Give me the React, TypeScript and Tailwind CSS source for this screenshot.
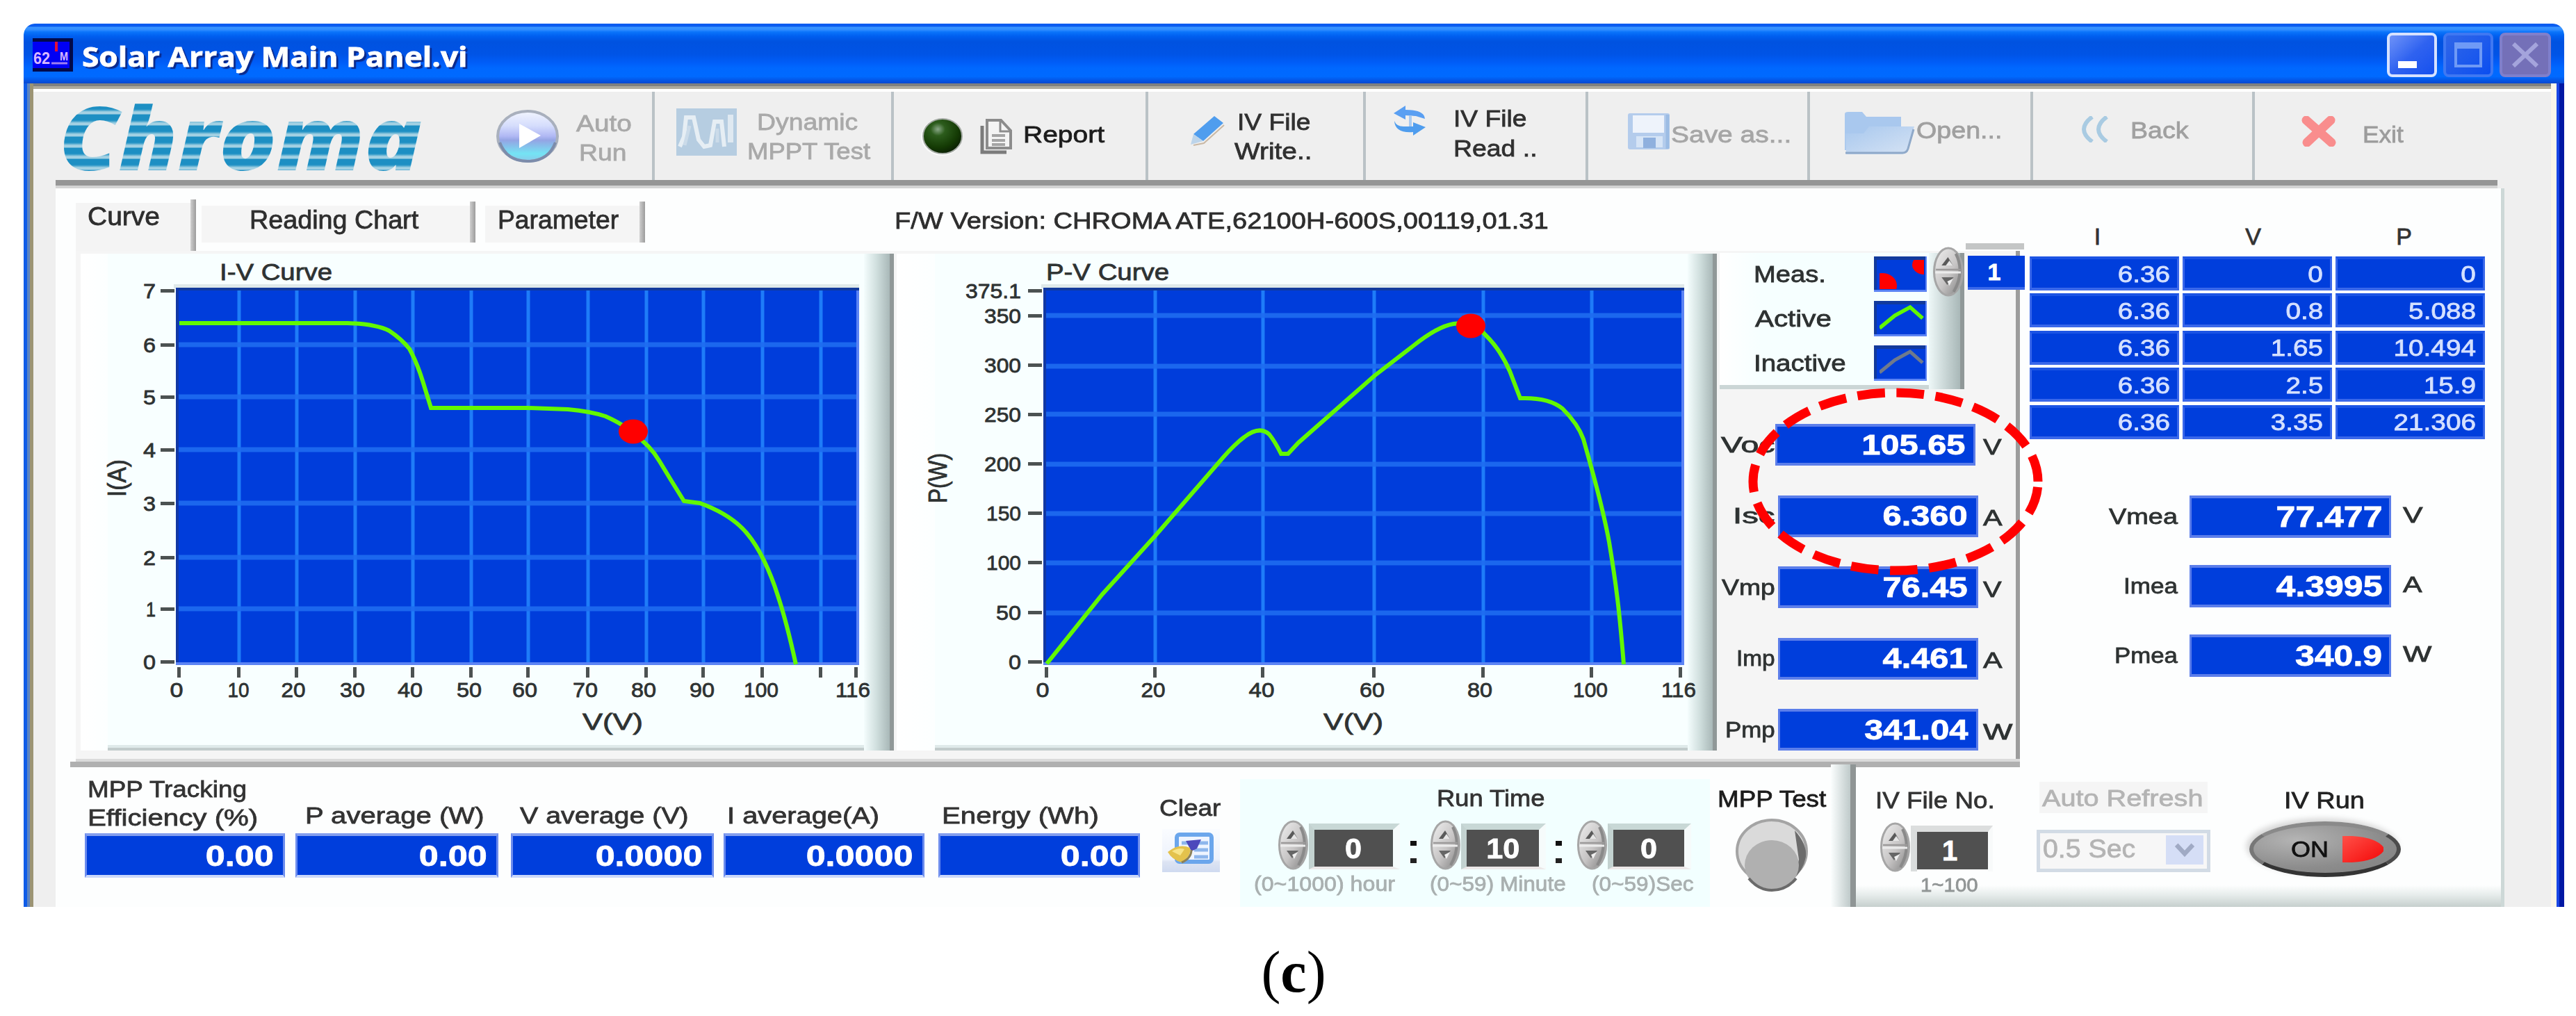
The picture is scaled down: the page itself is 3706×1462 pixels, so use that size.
import React, { useLayoutEffect, useRef } from "react";

/* One line of text stretched horizontally to fill the width of its box. */
function Fit({ className = "", children }: { className?: string; children: React.ReactNode }) {
  const outer = useRef<HTMLDivElement>(null);
  const inner = useRef<HTMLSpanElement>(null);
  useLayoutEffect(() => {
    const o = outer.current;
    const i = inner.current;
    if (o && i && i.offsetWidth > 0) {
      i.style.transform = `scaleX(${o.clientWidth / i.offsetWidth})`;
    }
  });
  return (
    <div ref={outer} className={"flex shrink-0 items-center whitespace-pre leading-none " + className}>
      <span ref={inner} className="inline-block origin-left">
        {children}
      </span>
    </div>
  );
}

function Spinner({ className = "" }: { className?: string }) {
  return (
    <svg viewBox="0 0 45 72" preserveAspectRatio="none" className={"shrink-0 " + className}>
      <defs>
        <linearGradient id="spin" x1="0" x2="1" y1="0" y2="1">
          <stop offset="0" stopColor="#f0f0f0" />
          <stop offset="0.55" stopColor="#c6c4c4" />
          <stop offset="1" stopColor="#7c7c7c" />
        </linearGradient>
      </defs>
      <ellipse cx="22.5" cy="36" rx="20" ry="34" fill="url(#spin)" stroke="#a6a6a6" strokeWidth="3" />
      <path d="M33 10 Q46 36 30 65" fill="none" stroke="#8a8a8a" strokeWidth="4" />
      <path d="M5 33 H40" stroke="#9c9a9a" strokeWidth="2.5" />
      <path d="M4 37 H40" stroke="#ececec" strokeWidth="3" />
      <path d="M13 27 L22 15 L29 27 Z" fill="#5a5a5a" />
      <path d="M19 27 L24 20 L29 27 Z" fill="#e6e6e6" />
      <path d="M13 44 H30 L21 55 Z" fill="#666" />
      <path d="M21 50 L29 46 L24 56 Z" fill="#f0f0f0" />
    </svg>
  );
}

function BlueBox({ className = "", text }: { className?: string; text: string }) {
  return (
    <div
      className={
        "flex shrink-0 items-center justify-end border-x-[3px] border-y-[4px] border-[#5c7eea] bg-[#003edc] font-bold leading-none text-white " +
        className
      }
    >
      <span className="inline-block origin-right scale-x-[1.19]">{text}</span>
    </div>
  );
}

const TITLE_BG =
  "bg-[linear-gradient(to_bottom,#0a5cf0_0px,#0a5cf0_4px,#3b96ff_5px,#2f8cff_9px,#0a74fb_12px,#005ff0_18px,#0052e0_26px,#0054e6_44px,#005df8_56px,#0068ff_64px,#006aff_76px,#0458e8_81px,#0a48d0_86px)]";

function TitleBar() {
  return (
    <div className={"flex h-[86px] shrink-0 items-start rounded-t-[16px] " + TITLE_BG}>
      <div className="mt-[21px] ml-[13px] flex h-[48px] w-[58px] items-center border-y-[5px] border-r-[5px] border-[#020a4a] bg-[#0000f4]">
        <svg viewBox="0 0 53 38" className="h-[38px] w-[53px] shrink-0">
          <path d="M34 0 V14" stroke="#e0103a" strokeWidth="4" />
          <text x="1" y="32" fontWeight="bold" fontSize="24" fill="#d8b8ff" textLength="24" lengthAdjust="spacingAndGlyphs">62</text>
          <text x="39" y="27" fontWeight="bold" fontSize="17" fill="#d8b8ff" textLength="12" lengthAdjust="spacingAndGlyphs">M</text>
          <path d="M27 31 H50" stroke="#a080f0" strokeWidth="3" />
        </svg>
      </div>
      <Fit className="mt-[27px] ml-[13px] h-[40px] w-[554px] text-[40px] font-bold text-white [font-family:'Open_Sans',sans-serif] [text-shadow:3px_3px_1px_#0b2a8c]">
        Solar Array Main Panel.vi
      </Fit>
      <div className="mt-[13px] mr-[19px] ml-auto flex gap-[9px]">
        <div className="flex h-[64px] w-[72px] items-end rounded-[8px] border-[4px] border-[#d6e2ff] bg-linear-to-br from-[#6f92f8] via-[#2f62f0] to-[#1450ee] pb-[9px] pl-[12px]">
          <div className="h-[10px] w-[27px] bg-white" />
        </div>
        <div className="flex h-[64px] w-[72px] items-center justify-center rounded-[8px] border-[4px] border-[#3f78f2] bg-linear-to-br from-[#2f66e8] to-[#0a4ef0]">
          <div className="h-[36px] w-[40px] border-[4px] border-t-[9px] border-[#6f9af6]" />
        </div>
        <div className="flex h-[64px] w-[74px] items-center justify-center rounded-[8px] border-[4px] border-[#7f7fcc] bg-[#7470b8]">
          <svg viewBox="0 0 40 36" className="h-[36px] w-[42px]">
            <path d="M3 2 L37 34 M37 2 L3 34" stroke="#a4a4dc" strokeWidth="6" />
          </svg>
        </div>
      </div>
    </div>
  );
}

const CELL = "flex h-[127px] shrink-0 items-center border-r-[4px] border-[#bac2c6]";

function Toolbar() {
  return (
    <div className="flex h-[127px] shrink-0 bg-[#efefef] text-[34px]">
      <div className={CELL + " w-[894px]"}>
        <Fit className="ml-[37px] h-[127px] w-[528px] text-[126px] font-extrabold text-transparent italic [-webkit-text-stroke:0px] [font-family:'Open_Sans',sans-serif] [&>span]:bg-[repeating-linear-gradient(to_bottom,#1d8fc3_0px,#1d8fc3_8px,#55abd0_10px,#a3d1e3_12px,#a3d1e3_15px,#1d8fc3_16px)] [&>span]:bg-clip-text [&>span]:pr-[6px]">
          Chroma
        </Fit>
        <svg viewBox="0 0 92 78" className="ml-[100px] h-[78px] w-[92px] shrink-0">
          <defs>
            <linearGradient id="play" x1="0" x2="0" y1="0" y2="1">
              <stop offset="0" stopColor="#f2f5ff" />
              <stop offset="0.3" stopColor="#d4dcfc" />
              <stop offset="0.5" stopColor="#b0b8f4" />
              <stop offset="0.58" stopColor="#94a4e4" />
              <stop offset="0.85" stopColor="#74e4f4" />
              <stop offset="1" stopColor="#8ac8ea" />
            </linearGradient>
          </defs>
          <ellipse cx="46" cy="39" rx="43" ry="36" fill="url(#play)" stroke="#a9b0bd" strokeWidth="4" />
          <path d="M6 48 Q16 75 46 75 Q76 75 86 48" fill="none" stroke="#7c8cab" strokeWidth="4" />
          <path d="M34 21 L65 38 L34 56 Z" fill="#fff" />
        </svg>
        <div className="mt-[5px] ml-[24px] flex flex-col text-[#a9a9a9]">
          <Fit className="h-[42px] w-[80px]">Auto</Fit>
          <Fit className="ml-[4px] h-[42px] w-[68px]">Run</Fit>
        </div>
      </div>
      <div className={CELL + " w-[344px]"}>
        <svg viewBox="0 0 89 70" className="mb-[12px] ml-[30px] h-[70px] w-[89px] shrink-0">
          <rect x="1" y="1" width="87" height="68" fill="#b6cde1" />
          <path d="M6 56 L12 42 L15 14 H26 L33 46 L41 56 L50 54 L56 20 H66 L70 56" fill="none" stroke="#e6eef4" strokeWidth="6" />
          <path d="M13 54 L20 26 M60 50 V30" stroke="#cbdbe9" strokeWidth="5" />
          <path d="M79 10 V50" stroke="#dfe9f1" strokeWidth="8" />
        </svg>
        <div className="ml-[14px] flex flex-col text-[#a9a9a9]">
          <Fit className="ml-[14px] h-[42px] w-[145px]">Dynamic</Fit>
          <Fit className="h-[42px] w-[177px]">MPPT Test</Fit>
        </div>
      </div>
      <div className={CELL + " w-[366px] text-[#1c1c1c]"}>
        <svg viewBox="0 0 64 58" className="ml-[36px] h-[58px] w-[64px] shrink-0">
          <defs>
            <radialGradient id="led" cx="0.38" cy="0.3" r="0.75">
              <stop offset="0" stopColor="#8aa888" />
              <stop offset="0.25" stopColor="#2c5c1c" />
              <stop offset="0.7" stopColor="#143a04" />
              <stop offset="1" stopColor="#0a1c04" />
            </radialGradient>
          </defs>
          <ellipse cx="33" cy="30" rx="30" ry="27" fill="#fafafa" />
          <ellipse cx="34" cy="29" rx="28" ry="25" fill="url(#led)" stroke="#a4aaa4" strokeWidth="2" />
        </svg>
        <svg viewBox="0 0 52 54" className="ml-[22px] h-[54px] w-[52px] shrink-0">
          <path d="M12 4 H32 L46 19 V44 H12 Z" fill="#f4f4f4" stroke="#8c8c8c" strokeWidth="4" />
          <path d="M31 4 V20 H46" fill="none" stroke="#8c8c8c" strokeWidth="3" />
          <path d="M5 12 V50 H40" fill="none" stroke="#7c7c7c" strokeWidth="5" />
          <path d="M19 26 H38 M19 33 H38 M19 39 H38" stroke="#a4a4a4" strokeWidth="4" />
        </svg>
        <Fit className="mb-[6px] ml-[12px] h-[42px] w-[117px]">Report</Fit>
      </div>
      <div className={CELL + " w-[313px] text-[#303030]"}>
        <svg viewBox="0 0 52 46" className="mb-[18px] ml-[59px] h-[46px] w-[52px] shrink-0">
          <path d="M36 3 L49 13 L20 39 L6 29 Z" fill="#4f9dee" />
          <path d="M6 29 L20 39 L2 44 Z" fill="#bcd4ea" />
          <path d="M50 16 L21 42 L6 45" fill="none" stroke="#c9b8a4" strokeWidth="2" />
        </svg>
        <div className="ml-[13px] flex flex-col">
          <Fit className="ml-[4px] h-[42px] w-[105px]">IV File</Fit>
          <Fit className="h-[42px] w-[112px]">Write..</Fit>
        </div>
      </div>
      <div className={CELL + " w-[320px] text-[#303030]"}>
        <svg viewBox="0 0 50 44" className="mb-[43px] ml-[38px] h-[44px] w-[50px] shrink-0">
          <path d="M2 11 L19 0 V6 Q46 6 47 19 L34 15 L19 14 V20 Z" fill="#5a9ff2" />
          <path d="M3 22 Q6 30 16 30 H30 V24 L48 31 L30 43 V38 Q4 40 3 22 Z" fill="#4f9dee" />
          <path d="M26 14 V30" stroke="#a9cbf2" strokeWidth="4" />
        </svg>
        <div className="mb-[8px] ml-[38px] flex flex-col">
          <Fit className="h-[43px] w-[105px]">IV File</Fit>
          <Fit className="h-[43px] w-[121px]">Read ..</Fit>
        </div>
      </div>
      <div className={CELL + " w-[319px] text-[#a6a6a6]"}>
        <svg viewBox="0 0 64 54" className="mb-[13px] ml-[55px] h-[54px] w-[64px] shrink-0">
          <rect x="2" y="1" width="60" height="52" rx="3" fill="#b4ccec" />
          <rect x="9" y="4" width="45" height="25" fill="#eef3fb" />
          <rect x="14" y="34" width="38" height="16" fill="#d6e4f6" />
          <rect x="24" y="36" width="18" height="15" fill="#8fb0de" />
          <path d="M59 3 V52" stroke="#9cbce4" strokeWidth="5" />
        </svg>
        <Fit className="mb-[5px] h-[42px] w-[173px]">Save as...</Fit>
      </div>
      <div className={CELL + " w-[321px] text-[#a0a0a0]"}>
        <svg viewBox="0 0 106 64" className="mb-[8px] ml-[47px] h-[64px] w-[106px] shrink-0">
          <defs>
            <linearGradient id="fold" x1="0" x2="1" y1="0" y2="1">
              <stop offset="0" stopColor="#a8c8ee" />
              <stop offset="1" stopColor="#d6e3f4" />
            </linearGradient>
          </defs>
          <path d="M3 4 Q3 1 8 1 H28 L34 8 H84 V56 H3 Z" fill="#a9c8ee" />
          <path d="M38 22 H103 L92 58 Q90 62 84 62 H5 L4 32 H30 Z" fill="url(#fold)" />
          <path d="M4 60 H86 Q92 60 94 54 L102 26" fill="none" stroke="#8fa9c9" strokeWidth="3" />
        </svg>
        <Fit className="mb-[18px] h-[42px] w-[124px]">Open...</Fit>
      </div>
      <div className={CELL + " w-[319px] text-[#a0a0a0]"}>
        <svg viewBox="0 0 42 38" className="mb-[20px] ml-[67px] h-[38px] w-[42px] shrink-0">
          <path d="M18 1 Q-6 19 18 37 M39 1 Q15 19 39 37" fill="none" stroke="#a9cbe2" strokeWidth="6" />
        </svg>
        <Fit className="mb-[18px] ml-[31px] h-[42px] w-[84px]">Back</Fit>
      </div>
      <div className="flex h-[127px] grow items-center text-[#9c9c9c]">
        <svg viewBox="0 0 52 44" className="mb-[14px] ml-[66px] h-[44px] w-[52px] shrink-0">
          <path d="M8 6 L44 38 M43 6 L9 38" stroke="#f98d8d" strokeWidth="13" strokeLinecap="round" />
        </svg>
        <Fit className="mb-[6px] ml-[37px] h-[42px] w-[59px]">Exit</Fit>
      </div>
    </div>
  );
}

function Tabs() {
  return (
    <div className="flex h-[90px] shrink-0 items-start text-[36px] text-[#2e2e2e]">
      <div className="mt-[21px] flex h-[69px] w-[165px] items-start bg-[#f4f4f4] pl-[17px]">
        <Fit className="h-[39px] w-[104px]">Curve</Fit>
      </div>
      <div className="mt-[16px] h-[74px] w-[8px] bg-linear-to-r from-[#d0d0d0] to-[#9c9c9c]" />
      <div className="mt-[25px] ml-[8px] flex h-[53px] w-[386px] items-start bg-[#f5f5f5] pl-[69px]">
        <Fit className="h-[42px] w-[243px]">Reading Chart</Fit>
      </div>
      <div className="mt-[19px] h-[59px] w-[8px] bg-linear-to-r from-[#d0d0d0] to-[#9c9c9c]" />
      <div className="mt-[25px] ml-[14px] flex h-[53px] w-[222px] items-start bg-[#f5f5f5] pl-[18px]">
        <Fit className="h-[42px] w-[174px]">Parameter</Fit>
      </div>
      <div className="mt-[19px] h-[59px] w-[8px] bg-linear-to-r from-[#d0d0d0] to-[#9c9c9c]" />
      <Fit className="mt-[25px] ml-[359px] h-[42px] w-[941px] text-[34px]">F/W Version: CHROMA ATE,62100H-600S,00119,01.31</Fit>
    </div>
  );
}

type Label = { at: number; text: string; w: number };
type ChartSpec = {
  x: number;
  w: number;
  viewBox: string;
  gridX: number[];
  gridY: number[];
  tickX: number[];
  labelsX: Label[];
  labelsY: Label[];
  yRight: number;
  title: { x: number; w: number; text: string };
  xTitle: { x: number; w: number };
  yTitle: { x: number; w: number; text: string };
  curve: string;
  dot: [number, number];
};

const CHART_IV: ChartSpec = {
  x: 253,
  w: 983,
  viewBox: "155 365 1088 707",
  gridX: [344, 427, 511, 594, 678, 760, 846, 930, 1012, 1097, 1181],
  gridY: [496, 571, 647, 724, 802, 876],
  tickX: [258, 344, 427, 511, 594, 678, 760, 846, 930, 1012, 1097, 1181, 1232],
  labelsX: [
    { at: 254, text: "0", w: 19 },
    { at: 343, text: "10", w: 31 },
    { at: 422, text: "20", w: 35 },
    { at: 507, text: "30", w: 36 },
    { at: 590, text: "40", w: 36 },
    { at: 675, text: "50", w: 36 },
    { at: 755, text: "60", w: 36 },
    { at: 842, text: "70", w: 36 },
    { at: 926, text: "80", w: 36 },
    { at: 1010, text: "90", w: 36 },
    { at: 1095, text: "100", w: 50 },
    { at: 1227, text: "116", w: 50 },
  ],
  labelsY: [
    { at: 418, text: "7", w: 18 },
    { at: 496, text: "6", w: 18 },
    { at: 571, text: "5", w: 18 },
    { at: 647, text: "4", w: 18 },
    { at: 724, text: "3", w: 18 },
    { at: 802, text: "2", w: 18 },
    { at: 876, text: "1", w: 14 },
    { at: 952, text: "0", w: 18 },
  ],
  yRight: 224,
  title: { x: 316, w: 162, text: "I-V Curve" },
  xTitle: { x: 838, w: 87 },
  yTitle: { x: 169, w: 54, text: "I(A)" },
  curve:
    "M258 465 H500 Q540 466 560 476 Q578 488 589 502 Q600 522 608 548 L620 587 H759 L817 589 Q850 592 871 599 Q900 612 912 625 Q935 640 949 664 L966 692 L984 721 L1007 724 C1040 736 1062 752 1075 768 C1092 788 1108 822 1119 857 C1130 890 1138 924 1145 956",
  dot: [911, 621],
};

const CHART_PV: ChartSpec = {
  x: 1501,
  w: 922,
  viewBox: "1345 365 1083 707",
  gridX: [1662, 1817, 1977, 2134, 2290],
  gridY: [454, 527, 596, 668, 739, 810, 882],
  tickX: [1506, 1662, 1817, 1977, 2134, 2290, 2418],
  labelsX: [
    { at: 1500, text: "0", w: 19 },
    { at: 1659, text: "20", w: 35 },
    { at: 1815, text: "40", w: 37 },
    { at: 1974, text: "60", w: 36 },
    { at: 2129, text: "80", w: 36 },
    { at: 2288, text: "100", w: 50 },
    { at: 2415, text: "116", w: 50 },
  ],
  labelsY: [
    { at: 418, text: "375.1", w: 80 },
    { at: 454, text: "350", w: 53 },
    { at: 525, text: "300", w: 53 },
    { at: 596, text: "250", w: 53 },
    { at: 667, text: "200", w: 53 },
    { at: 738, text: "150", w: 50 },
    { at: 809, text: "100", w: 50 },
    { at: 881, text: "50", w: 36 },
    { at: 952, text: "0", w: 18 },
  ],
  yRight: 1469,
  title: { x: 1505, w: 177, text: "P-V Curve" },
  xTitle: { x: 1904, w: 86 },
  yTitle: { x: 1350, w: 72, text: "P(W)" },
  curve:
    "M1506 955 L1586 855 L1662 771 L1753 666 Q1775 640 1790 629 Q1812 612 1826 625 Q1834 635 1843 653 H1853 L1868 637 L1977 541 L2034 497 Q2068 470 2091 466 Q2120 462 2137 482 Q2158 502 2172 534 L2187 573 C2215 572 2236 578 2248 588 C2262 602 2272 615 2278 632 C2290 675 2305 725 2315 780 C2325 840 2330 880 2336 956",
  dot: [2116, 469],
};

function ChartPanel({ c, bevel, edge }: { c: ChartSpec; bevel: string; edge: string }) {
  return (
    <div className="mt-[4px] flex h-[715px] shrink-0">
      <div className={"h-[715px] shrink-0 bg-linear-to-r from-white to-[#fcffff] " + bevel} />
      <div className="relative z-10 flex shrink-0 flex-col bg-[#f8ffff]">
        <svg
          viewBox={c.viewBox}
          className={
            "h-[707px] overflow-visible [&_text]:stroke-[#2e3232] [&_text]:stroke-[0.8px] " + (c.x < 1000 ? "w-[1088px]" : "w-[1083px]")
          }
          fill="#2e3232"
        >
          <rect x={c.x - 3} y={409} width={c.w + 3} height={6} fill="#dfe9ea" />
          <rect x={c.x} y={414} width={c.w} height={543} fill="#003ddb" />
          {c.gridX.map((x) => (
            <rect key={x} x={x - 2.5} y={417} width={5} height={538} fill="#1e7cf8" />
          ))}
          {c.gridY.map((y) => (
            <rect key={y} x={c.x} y={y - 3.5} width={c.w} height={7} fill="#1e6cf0" opacity={0.9} />
          ))}
          <rect x={c.x} y={414} width={c.w} height={4} fill="#123a9c" />
          <rect x={c.x} y={414} width={4} height={543} fill="#1238a4" />
          <rect x={c.x} y={953} width={c.w} height={4} fill="#5c84f4" />
          <rect x={c.x + c.w - 4} y={418} width={4} height={539} fill="#5c84f4" />
          {c.tickX.map((x) => (
            <rect key={x} x={x - 3} y={960} width={5} height={15} fill="#4c5252" />
          ))}
          {c.labelsX.map((l) => (
            <text key={l.at} x={l.at - l.w / 2} y={1003} fontSize={30} textLength={l.w} lengthAdjust="spacingAndGlyphs">
              {l.text}
            </text>
          ))}
          {c.labelsY.map((l) => (
            <g key={l.at}>
              <text x={c.yRight - l.w} y={l.at + 11} fontSize={30} textLength={l.w} lengthAdjust="spacingAndGlyphs">
                {l.text}
              </text>
              <rect x={c.x - 22} y={l.at - 2} width={20} height={5} fill="#4c5252" />
            </g>
          ))}
          <text x={c.title.x} y={403} fontSize={34} textLength={c.title.w} lengthAdjust="spacingAndGlyphs">
            {c.title.text}
          </text>
          <text x={c.xTitle.x} y={1050} fontSize={33} textLength={c.xTitle.w} lengthAdjust="spacingAndGlyphs">
            V(V)
          </text>
          <text
            transform={`translate(${c.yTitle.x + 12} ${688 + c.yTitle.w / 2}) rotate(-90)`}
            fontSize={36}
            textLength={c.yTitle.w}
            lengthAdjust="spacingAndGlyphs"
          >
            {c.yTitle.text}
          </text>
          <path d={c.curve} fill="none" stroke="#62f800" strokeWidth={6} />
          <ellipse cx={c.dot[0]} cy={c.dot[1]} rx={21} ry={17.5} fill="#ff0000" />
        </svg>
        <div className="h-[4px] bg-[#dfeaea]" />
        <div className="h-[4px] bg-[#c2cccc]" />
      </div>
      <div className={"h-[715px] shrink-0 bg-linear-to-r from-[#f4fdfd] via-[#cfdedd] to-[#a9b8b8] " + edge} />
      <div className="h-[715px] w-[6px] shrink-0 bg-[#909898]" />
    </div>
  );
}

function LegendSwatch({ children }: { children: React.ReactNode }) {
  return (
    <svg viewBox="0 0 76 51" className="h-[51px] w-[76px] shrink-0">
      <defs>
        <clipPath id="swatch">
          <rect x="8" y="5" width="64" height="42" />
        </clipPath>
      </defs>
      <rect width="76" height="51" fill="#5c84f4" />
      <rect width="74" height="48" fill="#123a9c" />
      <rect x="4" y="5" width="70" height="43" fill="#003ddb" />
      <g clipPath="url(#swatch)">{children}</g>
    </svg>
  );
}

function Legend() {
  return (
    <div className="ml-[4px] flex h-[199px] shrink-0 pt-[3px] text-[33px] text-[#2e3232]">
      <div className="flex w-[301px] flex-col border-b-[6px] border-[#cbd6d6] bg-linear-to-r from-white via-[#f6ffff] via-20% to-[#f6ffff]">
        <div className="flex h-[62px] items-center pl-[49px]">
          <Fit className="h-[40px] w-[104px]">Meas.</Fit>
          <div className="ml-[69px]">
            <LegendSwatch>
              <ellipse cx="12" cy="42" rx="21" ry="18" fill="#f00" />
              <ellipse cx="73" cy="12" rx="18" ry="14" fill="#f00" />
            </LegendSwatch>
          </div>
        </div>
        <div className="mt-[3px] flex h-[65px] items-center pl-[51px]">
          <Fit className="h-[40px] w-[110px]">Active</Fit>
          <div className="ml-[61px]">
            <LegendSwatch>
              <path d="M8 39 L30 21 L52 9 L70 25" fill="none" stroke="#62f800" strokeWidth="5.5" />
            </LegendSwatch>
          </div>
        </div>
        <div className="flex h-[66px] items-center pl-[49px]">
          <Fit className="h-[40px] w-[133px]">Inactive</Fit>
          <div className="ml-[40px]">
            <LegendSwatch>
              <path d="M8 39 L30 21 L52 9 L70 25" fill="none" stroke="#6f7a8c" strokeWidth="5" />
            </LegendSwatch>
          </div>
        </div>
      </div>
      <div className="w-[45px] bg-linear-to-r from-[#eef8f8] to-[#a9b8b8]" />
      <div className="w-[6px] bg-[#909898]" />
    </div>
  );
}

const READOUTS = [
  { name: "Voc", value: "105.65", unit: "V", lw: "w-[78px]", uw: "w-[27px]" },
  { name: "Isc", value: "6.360", unit: "A", lw: "w-[61px]", uw: "w-[28px]" },
  { name: "Vmp", value: "76.45", unit: "V", lw: "w-[77px]", uw: "w-[27px]" },
  { name: "Imp", value: "4.461", unit: "A", lw: "w-[56px]", uw: "w-[28px]" },
  { name: "Pmp", value: "341.04", unit: "W", lw: "w-[72px]", uw: "w-[42px]" },
];

function Readouts() {
  return (
    <div className="relative mt-[29px] flex flex-col text-[31px] text-[#2e3232]">
      {READOUTS.map((r) => (
        <div key={r.name} className="flex h-[102.5px] shrink-0 items-center">
          <div className="flex w-[84px] shrink-0 justify-end">
            <Fit className={"h-[40px] " + r.lw}>{r.name}</Fit>
          </div>
          <BlueBox
            className={"h-[60px] w-[288px] pr-[12px] text-[41px] " + (r.name === "Voc" ? "mr-[11px]" : "ml-[4px] mr-[7px]")}
            text={r.value}
          />
          <Fit className={"mt-[6px] h-[40px] " + r.uw}>{r.unit}</Fit>
        </div>
      ))}
      <svg viewBox="0 0 424 270" className="absolute top-[-32px] left-[44px] h-[270px] w-[424px] overflow-visible">
        <ellipse cx="213" cy="136" rx="205" ry="128" fill="none" stroke="#ff0000" strokeWidth="13" strokeDasharray="39.7 16.6" strokeDashoffset="-8" />
      </svg>
    </div>
  );
}

const ROWS = [
  ["6.36", "0", "0"],
  ["6.36", "0.8", "5.088"],
  ["6.36", "1.65", "10.494"],
  ["6.36", "2.5", "15.9"],
  ["6.36", "3.35", "21.306"],
];

const MEASURED = [
  { name: "Vmea", value: "77.477", unit: "V", lw: "w-[99px]", uw: "w-[29px]" },
  { name: "Imea", value: "4.3995", unit: "A", lw: "w-[78px]", uw: "w-[28px]" },
  { name: "Pmea", value: "340.9", unit: "W", lw: "w-[91px]", uw: "w-[41px]" },
];

function DataSide() {
  return (
    <div className="relative flex w-[692px] shrink-0 flex-col pl-[14px]">
      <div className="grid h-[98px] w-[655px] shrink-0 grid-cols-3 pt-[45px] pr-[4px] text-center text-[34px] text-[#333]">
        <span className="h-[48px] pr-[22px] leading-[48px]">I</span>
        <span className="h-[48px] pr-[8px] leading-[48px]">V</span>
        <span className="h-[48px] pr-[8px] leading-[48px]">P</span>
      </div>
      <div className="grid w-[655px] shrink-0 grid-cols-3 gap-x-[5px] gap-y-[4.4px] text-[34px] text-[#d4e0ff]">
        {ROWS.flat().map((v, i) => (
          <div
            key={i}
            className="flex h-[49px] items-center justify-end border-x-[3px] border-t-[4px] border-b-[4px] border-[#3a68ea] border-t-[#1c54e4] bg-[#003edc] pr-[10px] leading-none"
          >
            <span className="inline-block origin-right scale-x-[1.14]">{v}</span>
          </div>
        ))}
      </div>
      <div className="mt-[62px] flex flex-col text-[31px] text-[#2e3232]">
        {MEASURED.map((m) => (
          <div key={m.name} className="flex h-[100px] shrink-0 items-center">
            <div className="flex w-[213px] shrink-0 justify-end">
              <Fit className={"h-[40px] " + m.lw}>{m.name}</Fit>
            </div>
            <BlueBox className="ml-[17px] h-[61px] w-[290px] pr-[10px] text-[42px]" text={m.value} />
            <Fit className={"mb-[5px] ml-[17px] h-[40px] " + m.uw}>{m.unit}</Fit>
          </div>
        ))}
      </div>
      <div className="absolute top-[79px] left-[-126px] flex items-start">
        <Spinner className="mt-[5px] h-[72px] w-[46px]" />
        <div className="ml-[2px] h-[18px] w-[84px] border-t-[9px] border-[#c4c6c6] pt-[9px]">
          <div className="ml-[3px] flex h-[49px] w-[82px] items-center justify-center border-b-[4px] border-[#3a68ea] bg-[#003edc] pr-[6px] text-[34px] leading-none font-bold text-white">
            1
          </div>
        </div>
      </div>
    </div>
  );
}

const AVERAGES = [
  { label: "P average (W)", v: "0.00", ml: "ml-[15px]", w: "w-[292px]", lw: "w-[258px] ml-[14px]" },
  { label: "V average (V)", v: "0.0000", ml: "ml-[18px]", w: "w-[292px]", lw: "w-[243px] ml-[13px]" },
  { label: "I average(A)", v: "0.0000", ml: "ml-[14px]", w: "w-[289px]", lw: "w-[219px] ml-[5px]" },
  { label: "Energy (Wh)", v: "0.00", ml: "ml-[20px]", w: "w-[290px]", lw: "w-[226px] ml-[5px]" },
];

const AVG_BOX =
  "flex h-[64px] items-center justify-end border-x-[3px] border-t-[4px] border-b-[4px] border-x-[#6c8cee] border-t-[#849eee] border-b-[#cbd8fa] bg-[#003edc] pr-[13px] text-[43px] leading-none font-bold text-white";

function TimeBox({ value, className }: { value: string; className: string }) {
  return (
    <div className="mt-[5px] h-[66px] border-t-[9px] border-r-[10px] border-b-[4px] border-l-[8px] border-t-[#c8d8d6] border-r-[#f6fbfb] border-b-[#ece8e8] border-l-[#c3d2d0]">
      <div className={"flex h-[53px] items-center justify-center bg-[#505050] text-[40px] leading-none font-bold text-white " + className}>
        <span className="inline-block scale-x-[1.08]">{value}</span>
      </div>
    </div>
  );
}

function Colon({ className }: { className: string }) {
  return (
    <div className={"mt-[30px] flex w-[9px] flex-col gap-[18px] " + className}>
      <div className="h-[7px] bg-[#111]" />
      <div className="h-[7px] bg-[#222]" />
    </div>
  );
}

function BottomBar() {
  return (
    <div className="flex h-[201px] shrink-0 text-[34px] text-[#333]">
      <div className="flex w-[2582px] shrink-0 items-start">
        <div className="ml-[42px] w-[288px]">
          <div className="flex h-[95px] flex-col justify-end pb-[3px]">
            <Fit className="ml-[4px] h-[41px] w-[229px]">MPP Tracking</Fit>
            <Fit className="ml-[4px] h-[41px] w-[245px]">Efficiency (%)</Fit>
          </div>
          <div className={AVG_BOX}>
            <span className="inline-block origin-right scale-x-[1.17]">0.00</span>
          </div>
        </div>
        {AVERAGES.map((a) => (
          <div key={a.label} className={a.ml + " " + a.w}>
            <div className="flex h-[95px] flex-col justify-end pb-[6px]">
              <Fit className={"h-[41px] " + a.lw}>{a.label}</Fit>
            </div>
            <div className={AVG_BOX}>
              <span className="inline-block origin-right scale-x-[1.17]">{a.v}</span>
            </div>
          </div>
        ))}
        <div className="ml-[28px] pt-[38px]">
          <Fit className="h-[40px] w-[88px]">Clear</Fit>
          <svg viewBox="0 0 83 62" className="mt-[11px] ml-[4px] h-[62px] w-[83px]">
            <defs>
              <linearGradient id="clr" x1="0" x2="0" y1="0" y2="1">
                <stop offset="0" stopColor="#fafcff" />
                <stop offset="0.7" stopColor="#edf2fc" />
                <stop offset="0.76" stopColor="#dde4f3" />
                <stop offset="1" stopColor="#cfdaf0" />
              </linearGradient>
            </defs>
            <rect width="83" height="62" fill="url(#clr)" />
            <rect x="21" y="8" width="50" height="39" rx="4" fill="#eef4ff" stroke="#6ba6ec" strokeWidth="6" />
            <path d="M28 20 H66 M46 30 H66 M46 40 H66" stroke="#8db6ec" strokeWidth="5" />
            <path d="M34 17 L56 15 L50 28 L42 32 Z" fill="#4c48bc" />
            <path d="M8 33 Q24 20 40 27 Q42 40 28 48 Q14 44 8 33 Z" fill="#e4c24c" />
            <path d="M14 32 Q24 26 32 29 L26 38 Z" fill="#f8e488" />
            <path d="M28 48 Q42 42 42 30" fill="none" stroke="#8c8058" strokeWidth="3" />
          </svg>
        </div>
        <div className="mt-[17px] ml-[28px] h-[184px] w-[676px] shrink-0 bg-[#f2ffff]">
          <Fit className="mt-[6px] ml-[283px] h-[41px] w-[156px]">Run Time</Fit>
          <div className="mt-[12px] flex h-[72px] items-start">
            <Spinner className="ml-[54px] h-[72px] w-[45px]" />
            <TimeBox value="0" className="w-[113px]" />
            <Colon className="ml-[15px]" />
            <Spinner className="ml-[19px] h-[72px] w-[45px]" />
            <TimeBox value="10" className="w-[104px]" />
            <Colon className="ml-[14px]" />
            <Spinner className="ml-[21px] h-[72px] w-[45px]" />
            <TimeBox value="0" className="w-[102px]" />
          </div>
          <div className="flex h-[40px] text-[29px] text-[#a9b0b0]">
            <Fit className="ml-[20px] h-[40px] w-[203px]">(0~1000) hour</Fit>
            <Fit className="ml-[50px] h-[40px] w-[196px]">(0~59) Minute</Fit>
            <Fit className="ml-[37px] h-[40px] w-[147px]">(0~59)Sec</Fit>
          </div>
        </div>
        <div className="mt-[24px] ml-[11px] text-[#1c1c1c]">
          <Fit className="h-[41px] w-[156px]">MPP Test</Fit>
          <svg viewBox="0 0 106 106" className="mt-[8px] ml-[25px] h-[106px] w-[106px]">
            <ellipse cx="53" cy="48" rx="50" ry="45" fill="#dadada" stroke="#a4a4a4" strokeWidth="4" />
            <path d="M86 18 Q104 38 102 56 Q98 76 84 88 L92 60 Z" fill="#6c6c6c" />
            <ellipse cx="53" cy="68" rx="39" ry="36" fill="#b0b0b0" />
            <path d="M20 87 Q34 104 53 104 Q74 104 88 87" fill="none" stroke="#6a6a6a" strokeWidth="4" />
          </svg>
        </div>
      </div>
      <div className="-mt-[4px] -ml-[28px] h-[205px] w-[28px] shrink-0 bg-linear-to-r from-[#fbfefe] to-[#bfcaca]" />
      <div className="-mt-[4px] h-[205px] w-[8px] shrink-0 bg-[#8f9595]" />
      <div className="flex h-[201px] grow items-start bg-[linear-gradient(to_bottom,#fdfefe_0px,#fdfefe_170px,#e6eceb_184px,#c6cfcd_201px)]">
        <div className="mt-[26px] ml-[28px] w-[172px]">
          <Fit className="h-[41px] w-[172px]">IV File No.</Fit>
          <div className="mt-[12px] flex h-[72px] items-start pl-[6px]">
            <Spinner className="h-[72px] w-[45px]" />
            <div className="mt-[5px] h-[66px] border-t-[9px] border-r-[7px] border-l-[9px] border-t-[#dcdede] border-r-[#f8fafa] border-l-[#dadddd]">
              <div className="flex h-[54px] w-[102px] items-center justify-center bg-[#505050] pr-[8px] text-[40px] leading-none font-bold text-white">1</div>
            </div>
          </div>
          <Fit className="ml-[65px] h-[38px] w-[83px] text-[28px] text-[#929696]">1~100</Fit>
        </div>
        <div className="mt-[21px] ml-[60px] w-[250px] text-[#b4b4b4]">
          <div className="ml-[4px] flex h-[45px] w-[242px] items-center bg-[#f5f5f5] pl-[4px]">
            <Fit className="h-[41px] w-[231px]">Auto Refresh</Fit>
          </div>
          <div className="mt-[24px] flex h-[61px] items-start border-[5px] border-[#d2dbe5] bg-[#f7f7f7]">
            <Fit className="mt-[1px] ml-[4px] h-[44px] w-[133px] text-[36px]">0.5 Sec</Fit>
            <div className="mt-[3px] mr-[5px] ml-auto flex h-[42px] w-[54px] items-center justify-center bg-[#d5def6]">
              <svg viewBox="0 0 32 22" className="h-[20px] w-[30px]">
                <path d="M3 3 L16 17 L29 3" fill="none" stroke="#a0aac4" strokeWidth="7" />
              </svg>
            </div>
          </div>
        </div>
        <div className="mt-[26px] ml-[56px] text-[#222]">
          <Fit className="ml-[50px] h-[41px] w-[116px]">IV Run</Fit>
          <div className="mt-[11px] flex h-[80px] w-[218px] items-center rounded-[50%] border-[6px] border-t-[#8a8a8a] border-r-[#4c4c4c] border-b-[#343434] border-l-[#777] bg-[radial-gradient(ellipse_at_30%_30%,#b4b4b4,#8c8c8c_60%,#808080)] shadow-[-4px_-4px_8px_#d4d4d4]">
            <Fit className="ml-[54px] h-[30px] w-[54px] text-[32px] text-[#111]">ON</Fit>
            <svg viewBox="0 0 60 38" className="ml-[20px] h-[38px] w-[60px] shrink-0">
              <defs>
                <linearGradient id="on" x1="0" x2="1" y1="0" y2="1">
                  <stop offset="0" stopColor="#ff5048" />
                  <stop offset="1" stopColor="#f40808" />
                </linearGradient>
              </defs>
              <path d="M0 0 H14 Q48 2 59 16 V22 Q48 36 14 38 H0 Z" fill="url(#on)" />
            </svg>
          </div>
        </div>
      </div>
    </div>
  );
}

export default function App() {
  return (
    <div className="flex h-[1462px] w-[3706px] flex-col overflow-hidden bg-white pt-[34px] pl-[34px] [-webkit-text-stroke:0.8px] [font-family:'Liberation_Sans',Arial,sans-serif]">
      <div className="flex h-[1271px] w-[3655px] shrink-0 flex-col overflow-hidden rounded-t-[16px]">
        <TitleBar />
        <div className="flex h-[1185px] shrink-0">
          <div className="w-[5px] bg-[#0f5ce8]" />
          <div className="w-[4px] bg-[#5c84c0]" />
          <div className="w-[5px] bg-[#9c9474]" />
          <div className="flex w-[3622px] shrink-0 flex-col bg-[#efefef]">
            <div className="h-[4px] shrink-0 bg-[#7f8080]" />
            <div className="h-[4px] shrink-0 bg-[#aeaa9c]" />
            <div className="h-[4px] shrink-0 bg-white" />
            <Toolbar />
            <div className="ml-[32px] flex w-[3523px] grow flex-col">
              <div className="h-[8px] w-[3513px] shrink-0 bg-[#969696]" />
              <div className="h-[4px] w-[3513px] shrink-0 bg-[#d4d4d4]" />
              <div className="flex grow flex-col border-r-[5px] border-[#cdd8d7] bg-[#fdfefe]">
                <div className="flex h-[833px] shrink-0">
                  <div className="flex w-[2826px] shrink-0 flex-col pl-[29px]">
                    <Tabs />
                    <div className="flex h-[743px] shrink-0 flex-col">
                      <div className="flex h-[731px] shrink-0 border-r-[6px] border-[#9c9c9c] bg-[#f5f5f5] pl-[7px]">
                        <ChartPanel c={CHART_IV} bevel="w-[39px]" edge="w-[37px]" />
                        <div className="w-[4px] shrink-0" />
                        <ChartPanel c={CHART_PV} bevel="w-[55px]" edge="w-[36px]" />
                        <div className="flex w-[430px] shrink-0 flex-col">
                          <Legend />
                          <Readouts />
                        </div>
                      </div>
                      <div className="h-[4px] shrink-0 bg-[#dadada]" />
                      <div className="-ml-[8px] h-[8px] shrink-0 bg-[#b0b0b0]" />
                    </div>
                  </div>
                  <DataSide />
                </div>
                <BottomBar />
              </div>
            </div>
          </div>
          <div className="w-[8px] bg-[#fbf6ea]" />
          <div className="w-[4px] bg-[#1c48e4]" />
          <div className="w-[7px] bg-[#0018a4]" />
        </div>
      </div>
      <div className="ml-[1785px] flex h-[120px] w-[84px] items-center justify-center pt-[68px] text-[84px] leading-none text-black [-webkit-text-stroke:0px] [font-family:'Liberation_Serif',serif]">
        <span>(</span>
        <span className="font-bold">c</span>
        <span>)</span>
      </div>
    </div>
  );
}
